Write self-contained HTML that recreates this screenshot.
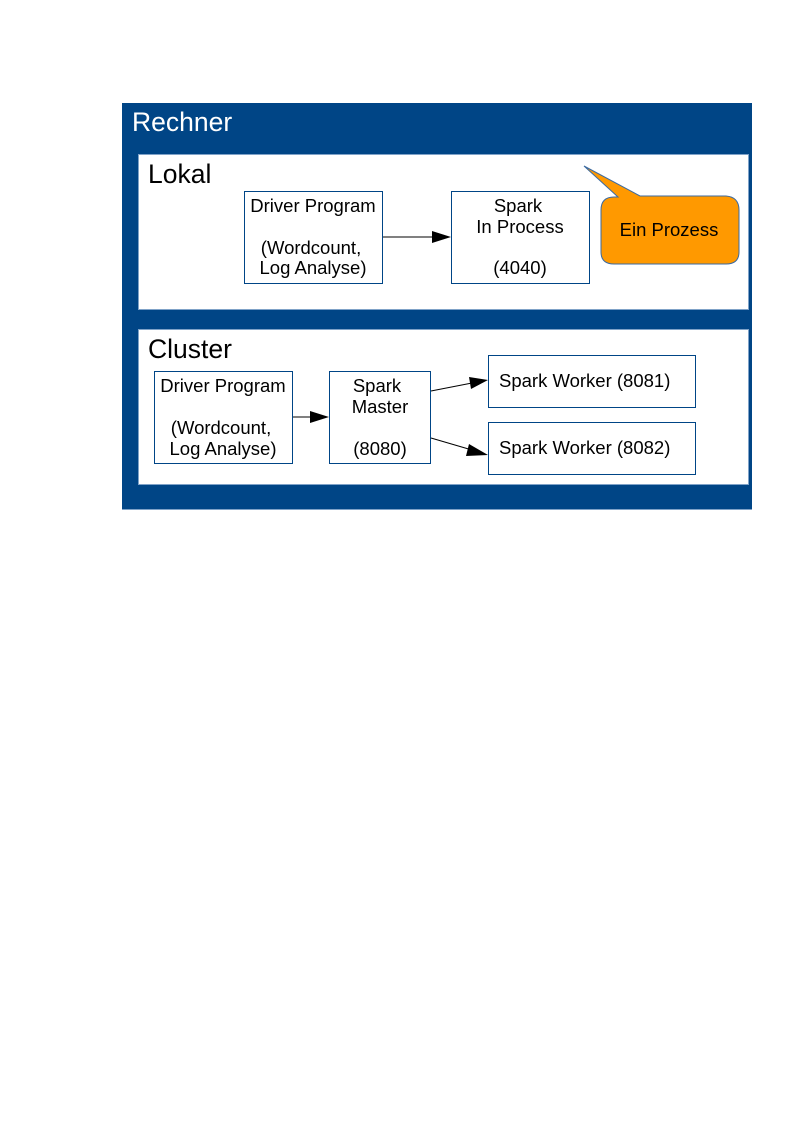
<!DOCTYPE html>
<html><head><style>body{margin:0;background:#fff}svg{display:block}</style></head><body>
<svg width="794" height="1123" xmlns="http://www.w3.org/2000/svg" font-family="Liberation Sans, sans-serif">
<rect x="122" y="103" width="630" height="407" fill="#004586"/>
<line x1="122" y1="509.5" x2="752" y2="509.5" stroke="#7fa2c8"/>
<text x="132" y="131" fill="#fff" font-size="26.5">Rechner</text>
<rect x="138.5" y="154.5" width="610" height="155" fill="#fff" stroke="#7fa2c8"/>
<text x="148" y="183" font-size="26.5">Lokal</text>
<rect x="138.5" y="329.5" width="610" height="155" fill="#fff" stroke="#7fa2c8"/>
<text x="148" y="358" font-size="26.5">Cluster</text>
<g fill="#fff" stroke="#004586" stroke-width="1">
<rect x="244.5" y="191.5" width="138" height="92"/>
<rect x="451.5" y="191.5" width="138" height="92"/>
<rect x="154.5" y="371.5" width="138" height="92"/>
<rect x="329.5" y="371.5" width="101" height="92"/>
<rect x="488.5" y="355.5" width="207" height="52"/>
<rect x="488.5" y="422.5" width="207" height="52"/>
</g>
<path d="M584 166 L640 196 L726 196 Q739 197 739 210 L739 252 Q739 264 726 264 L614 264 Q601 264 601 252 L601 210 Q601 197 614 197 L618 197 Z" fill="#ff9900" stroke="#3b6aa0" stroke-width="1"/>
<text x="669" y="236" font-size="18.5" text-anchor="middle">Ein Prozess</text>
<g font-size="18.5" text-anchor="middle">
<text x="313" y="212">Driver Program</text>
<text x="311" y="254">(Wordcount,</text>
<text x="313" y="274">Log Analyse)</text>
<text x="518" y="212">Spark</text>
<text x="520" y="233">In Process</text>
<text x="520" y="274">(4040)</text>
<text x="223" y="392">Driver Program</text>
<text x="221" y="434">(Wordcount,</text>
<text x="223" y="455">Log Analyse)</text>
<text x="377" y="392">Spark</text>
<text x="380" y="413">Master</text>
<text x="380" y="455">(8080)</text>
</g>
<g font-size="18.5">
<text x="499" y="387">Spark Worker (8081)</text>
<text x="499" y="454">Spark Worker (8082)</text>
</g>
<g stroke="#000" stroke-width="1">
<line x1="383" y1="237" x2="436" y2="237"/>
<line x1="293" y1="417" x2="314" y2="417"/>
<line x1="431" y1="391" x2="472" y2="383"/>
<line x1="431" y1="438" x2="472" y2="450"/>
</g>
<g fill="#000">
<polygon points="451,237 432,231 432,243"/>
<polygon points="329,417 310,411 310,423"/>
<polygon points="488,380 469,377 471,389"/>
<polygon points="488,455 469,444 466,456"/>
</g>
</svg>
</body></html>
